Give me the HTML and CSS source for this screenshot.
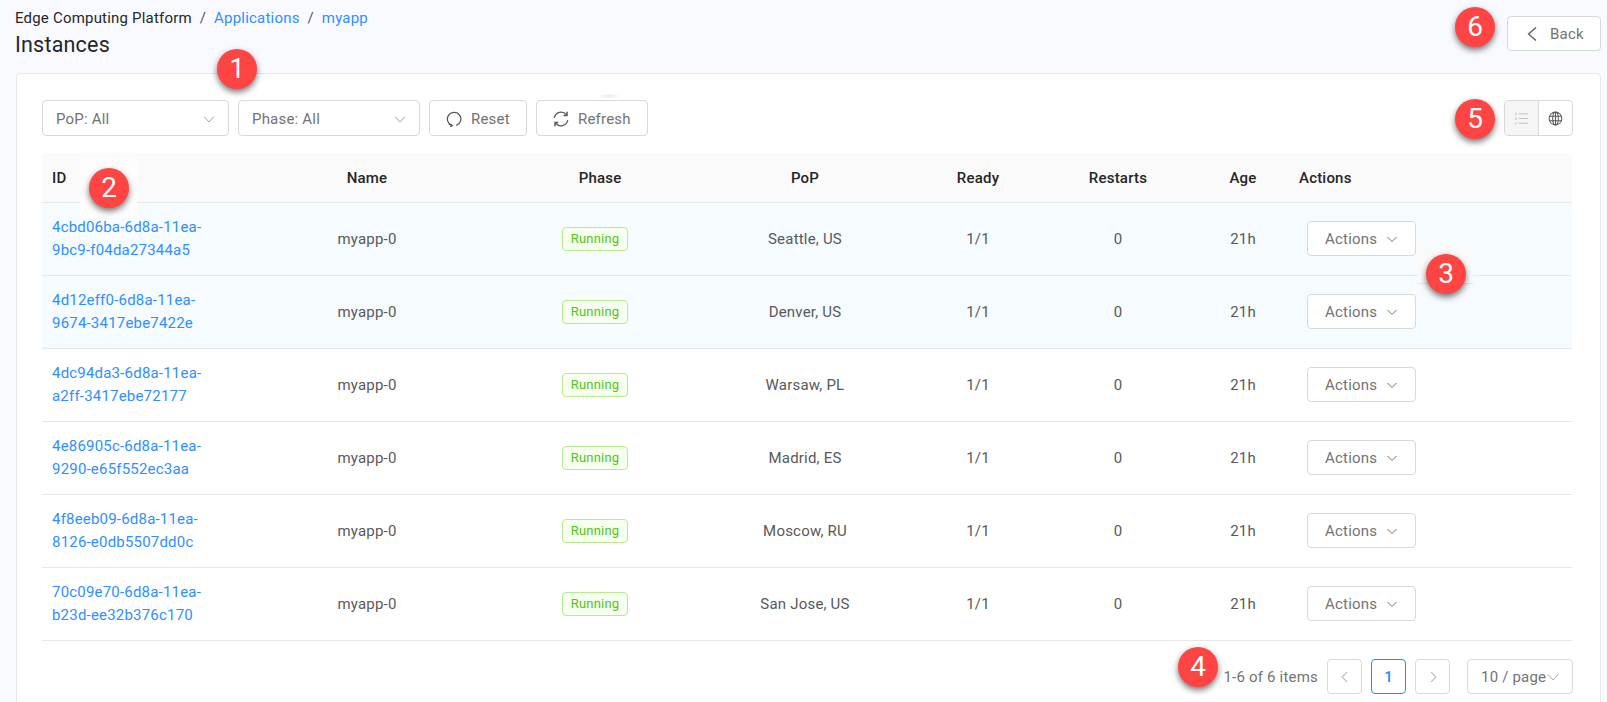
FILE: index.html
```html
<!DOCTYPE html>
<html lang="en">
<head>
    <meta charset="UTF-8">
    <meta name="viewport" content="width=device-width, initial-scale=1.0">
    <title>Instances</title>
    <link rel="stylesheet" href="styles.css">
</head>
<body>
    <div id="main">
        <!--top: breadcrumb, title and back button-->
        <div class="page-head">
            <div class="head-text">
                <div class="crumbs">
                    <span>Edge Computing Platform</span>
                    <i>/</i>
                    <a href="javascript:;">Applications</a>
                    <i>/</i>
                    <a href="javascript:;">myapp</a>
                </div>
                <h1>Instances</h1>
            </div>
            <a class="btn btn-back" href="javascript:;">
                <svg class="ico" viewBox="0 0 16 16"><path d="M12 1.500 4.500 8l7.500 6.500"/></svg>
                Back
            </a>
        </div>

        <div class="card">
            <!--filters-->
            <div class="toolbar">
                <div class="select sel-pop">PoP: All<svg class="chev" viewBox="0 0 12 12"><path d="M1 3.500 6 9l5-5.500"/></svg></div>
                <div class="select sel-phase">Phase: All<svg class="chev" viewBox="0 0 12 12"><path d="M1 3.500 6 9l5-5.500"/></svg></div>
                <a class="btn btn-reset" href="javascript:;">
                    <svg class="ico" viewBox="0 0 16 16"><path d="M6 14.400A6.700 6.700 0 1 1 10.200 14.400"/><path d="M2.900 12.800 6 14.500 4.300 16" class="thin"/></svg>
                    Reset
                </a>
                <a class="btn btn-refresh" href="javascript:;">
                    <svg class="ico" viewBox="0 0 16 16"><path d="M1.300 7A6.800 6.800 0 0 1 13.400 3.800"/><path d="M14.700 9A6.800 6.800 0 0 1 2.600 12.200"/><path d="M14 .8V4.400H10.600" class="thin"/><path d="M2 15.200V11.600H5.400" class="thin"/></svg>
                    Refresh
                </a>
                <div class="toggle">
                    <span class="toggle-on">
                        <svg class="ico-list" viewBox="0 0 16 16"><path d="M5 3h10M5 8h10M5 13h10"/><path d="M1 2.500h2M1 4h2M1 7.500h2M1 9h2M1 12.500h2M1 14h2" class="thin"/></svg>
                    </span>
                    <span>
                        <svg class="ico-globe" viewBox="0 0 16 16"><circle cx="8" cy="8" r="6.800"/><ellipse cx="8" cy="8" rx="3" ry="6.800"/><path d="M8 1.200v13.600M1.800 5.500h12.400M1.800 10.500h12.400"/></svg>
                    </span>
                </div>
            </div>

            <table class="grid">
                <colgroup>
                    <col class="c-id"><col class="c-name"><col class="c-phase"><col class="c-pop">
                    <col class="c-ready"><col class="c-restarts"><col class="c-age"><col class="c-act">
                </colgroup>
                <thead>
                    <tr>
                        <th class="left">ID</th><th>Name</th><th>Phase</th><th>PoP</th>
                        <th>Ready</th><th>Restarts</th><th>Age</th><th class="left">Actions</th>
                    </tr>
                </thead>
                <tbody>
                    <tr class="hl">
                        <td class="left"><a href="javascript:;">4cbd06ba-6d8a-11ea-9bc9-f04da27344a5</a></td>
                        <td>myapp-0</td><td><span class="tag">Running</span></td><td>Seattle, US</td>
                        <td>1/1</td><td>0</td><td>21h</td>
                        <td class="left"><a class="btn btn-act" href="javascript:;">Actions<svg class="chev" viewBox="0 0 12 12"><path d="M1.500 4 6 8.500 10.500 4"/></svg></a></td>
                    </tr>
                    <tr class="hl">
                        <td class="left"><a href="javascript:;">4d12eff0-6d8a-11ea-9674-3417ebe7422e</a></td>
                        <td>myapp-0</td><td><span class="tag">Running</span></td><td>Denver, US</td>
                        <td>1/1</td><td>0</td><td>21h</td>
                        <td class="left"><a class="btn btn-act" href="javascript:;">Actions<svg class="chev" viewBox="0 0 12 12"><path d="M1.500 4 6 8.500 10.500 4"/></svg></a></td>
                    </tr>
                    <tr>
                        <td class="left"><a href="javascript:;">4dc94da3-6d8a-11ea-a2ff-3417ebe72177</a></td>
                        <td>myapp-0</td><td><span class="tag">Running</span></td><td>Warsaw, PL</td>
                        <td>1/1</td><td>0</td><td>21h</td>
                        <td class="left"><a class="btn btn-act" href="javascript:;">Actions<svg class="chev" viewBox="0 0 12 12"><path d="M1.500 4 6 8.500 10.500 4"/></svg></a></td>
                    </tr>
                    <tr>
                        <td class="left"><a href="javascript:;">4e86905c-6d8a-11ea-9290-e65f552ec3aa</a></td>
                        <td>myapp-0</td><td><span class="tag">Running</span></td><td>Madrid, ES</td>
                        <td>1/1</td><td>0</td><td>21h</td>
                        <td class="left"><a class="btn btn-act" href="javascript:;">Actions<svg class="chev" viewBox="0 0 12 12"><path d="M1.500 4 6 8.500 10.500 4"/></svg></a></td>
                    </tr>
                    <tr>
                        <td class="left"><a href="javascript:;">4f8eeb09-6d8a-11ea-8126-e0db5507dd0c</a></td>
                        <td>myapp-0</td><td><span class="tag">Running</span></td><td>Moscow, RU</td>
                        <td>1/1</td><td>0</td><td>21h</td>
                        <td class="left"><a class="btn btn-act" href="javascript:;">Actions<svg class="chev" viewBox="0 0 12 12"><path d="M1.500 4 6 8.500 10.500 4"/></svg></a></td>
                    </tr>
                    <tr>
                        <td class="left"><a href="javascript:;">70c09e70-6d8a-11ea-b23d-ee32b376c170</a></td>
                        <td>myapp-0</td><td><span class="tag">Running</span></td><td>San Jose, US</td>
                        <td>1/1</td><td>0</td><td>21h</td>
                        <td class="left"><a class="btn btn-act" href="javascript:;">Actions<svg class="chev" viewBox="0 0 12 12"><path d="M1.500 4 6 8.500 10.500 4"/></svg></a></td>
                    </tr>
                </tbody>
            </table>

            <!--pagination-->
            <div class="pager">
                <span class="total">1-6 of 6 items</span>
                <a class="pg pg-off" href="javascript:;"><svg viewBox="0 0 12 12"><path d="M8 1 3 6l5 5"/></svg></a>
                <a class="pg pg-on" href="javascript:;">1</a>
                <a class="pg pg-off" href="javascript:;"><svg viewBox="0 0 12 12"><path d="M4 1l5 5-5 5"/></svg></a>
                <div class="pg-size">10 / page<svg class="chev" viewBox="0 0 12 12"><path d="M1 3.500 6 9l5-5.500"/></svg></div>
            </div>
        </div>
    </div>

    <!--numbered callouts pasted over the screenshot-->
    <div class="patch patch-1"></div>
    <div class="patch patch-2"></div>
    <div class="patch patch-3"></div>
    <div class="mark mark-1">1</div>
    <div class="mark mark-2">2</div>
    <div class="mark mark-3">3</div>
    <div class="mark mark-4">4</div>
    <div class="mark mark-5">5</div>
    <div class="mark mark-6">6</div>
</body>
</html>
```

FILE: styles.css
```css
*{
    margin:0;padding:0;
    box-sizing:border-box;
}
html,body{
    height:702px;
    overflow:hidden;
}
body{
    position:relative;
    background-color:#f8faff;
    font-family:Roboto,"Liberation Sans",sans-serif;
    font-size:15px;
    letter-spacing:.2px;
    color:#595959;
}
a{
    color:#2f8fff;
    text-decoration:none;
}
#main{
    padding:0 6px 0 16px;
}
svg{
    fill:none;
    stroke:currentColor;
    display:block;
}

/* head */
.page-head{
    height:73px;
    display:flex;
    justify-content:space-between;
    align-items:flex-start;
}
.head-text{
    margin-left:-1px;
}
.crumbs{
    padding-top:8px;
    line-height:20px;
    color:#262626;
}
.crumbs i{
    font-style:normal;
    margin:0 4px;
    color:#555;
}
h1{
    font-size:21.500px;
    font-weight:400;
    line-height:28px;
    margin-top:3px;
    color:#262626;
}

/* buttons */
.btn{
    display:flex;
    align-items:center;
    height:36px;
    border:1px solid #d9d9d9;
    border-radius:4px;
    background-color:#fff;
    color:#737373;
}
.ico{
    width:16px;
    height:16px;
    stroke-width:1.300;
    color:#595959;
}
.ico .thin{
    stroke-width:1.500;
}
.btn-back{
    width:94px;
    height:35px;
    margin-top:16px;
    padding-left:16px;
}
.btn-back .ico{
    margin-right:10px;
}

/* card */
.card{
    height:640px;
    padding:26px 27px 0 25px;
    background-color:#fff;
    border:1px solid #e8e8e8;
    border-radius:4px;
}
.toolbar{
    display:flex;
    align-items:center;
    gap:9px;
    height:36px;
}
.select{
    display:flex;
    align-items:center;
    justify-content:space-between;
    height:36px;
    padding:1px 13px 0;
    border:1px solid #d9d9d9;
    border-radius:4px;
    color:#737373;
}
.sel-pop{
    width:187px;
}
.sel-phase{
    width:182px;
}
.chev{
    width:12px;
    height:12px;
    color:#a6a6a6;
    stroke-width:1;
}
.btn-reset{
    width:98px;
    padding:1px 0 0 16px;
}
.btn-refresh{
    width:112px;
    padding:1px 0 0 16px;
}
.btn-reset .ico,.btn-refresh .ico{
    margin-right:9px;
}
.toggle{
    display:flex;
    height:36px;
    margin-left:auto;
    border:1px solid #d9d9d9;
    border-radius:4px;
    overflow:hidden;
}
.toggle span{
    width:33.500px;
    display:flex;
    align-items:center;
    justify-content:center;
}
.toggle .toggle-on{
    background-color:#f5f5f5;
    border-right:1px solid #d9d9d9;
}
.ico-list{
    width:15px;
    height:15px;
    color:#bfbfbf;
}
.ico-list .thin{
    stroke-width:.8;
}
.ico-globe{
    width:15px;
    height:15px;
    color:#595959;
    stroke-width:1.100;
}

/* table */
.grid{
    width:1530px;
    margin-top:17px;
    border-collapse:separate;
    border-spacing:0;
    table-layout:fixed;
}
.c-id{width:185px;}
.c-name{width:280px;}
.c-phase{width:186px;}
.c-pop{width:224px;}
.c-ready{width:122px;}
.c-restarts{width:158px;}
.c-age{width:92px;}
.c-act{width:283px;}
.grid th{
    height:50px;
    padding:0 10px;
    background-color:#fafafa;
    border-bottom:1px solid #e8e8e8;
    font-weight:500;
    color:#262626;
    text-align:center;
}
.grid thead th:first-child{
    border-top-left-radius:4px;
}
.grid thead th:last-child{
    border-top-right-radius:4px;
}
.grid td{
    height:73px;
    padding:0 10px;
    border-bottom:1px solid #e8e8e8;
    line-height:23px;
    text-align:center;
}
.grid .left{
    text-align:left;
}
.grid .hl td{
    background-color:#f5fbff;
}
.tag{
    display:inline-block;
    width:66px;
    height:24px;
    margin-right:10px;
    line-height:22px;
    font-size:13px;
    color:#52c41a;
    background-color:#f6ffed;
    border:1px solid #b7eb8f;
    border-radius:4px;
    vertical-align:middle;
}
.btn-act{
    width:109px;
    height:35px;
    margin:0 0 1px 8px;
    padding:1px 0 0 17px;
}
.btn-act .chev{
    margin-left:9px;
    color:#737373;
}

/* pager */
.pager{
    display:flex;
    align-items:center;
    justify-content:flex-end;
    margin-top:18px;
    height:35px;
}
.total{
    margin-right:9px;
    color:#737373;
}
.pg{
    width:35px;
    height:35px;
    margin-right:9px;
    display:flex;
    align-items:center;
    justify-content:center;
    border:1px solid #d9d9d9;
    border-radius:4px;
}
.pg svg{
    width:12px;
    height:12px;
    color:#bfbfbf;
    stroke-width:1.100;
}
.pg-on{
    border-color:#1890ff;
    font-weight:500;
    color:#1890ff;
}
.pg-size{
    width:106px;
    height:35px;
    margin-left:8px;
    padding:0 13px 0 13px;
    display:flex;
    align-items:center;
    justify-content:space-between;
    border:1px solid #d9d9d9;
    border-radius:4px;
    color:#737373;
    white-space:nowrap;
}

/* callouts */
.mark{
    position:absolute;
    width:40px;
    height:40px;
    border-radius:50%;
    background-color:#ff4444;
    box-shadow:0 3px 6px rgba(0,0,0,.55);
    color:#fff;
    font-size:28px;
    letter-spacing:0;
    line-height:40px;
    text-align:center;
}
.mark-1{left:217px;top:49px;}
.mark-2{left:89px;top:168px;}
.mark-3{left:1426px;top:254px;}
.mark-4{left:1178px;top:647px;}
.mark-5{left:1455px;top:99px;}
.mark-6{left:1455px;top:7px;}
.patch{
    position:absolute;
}
.patch-1{
    left:597px;top:94px;
    width:24px;height:4px;
    background:radial-gradient(closest-side,#e6e6e6,#fff);
}
.patch-2{
    left:80px;top:158px;
    width:57px;height:60px;
    background-color:#fdfdfd;
}
.patch-3{
    left:1418px;top:243px;
    width:55px;height:59px;
    background:linear-gradient(#fafafa 0,#fafafa 40px,#e8e8e8 40px,#e8e8e8 41px,#f7fbff 41px);
}
```
